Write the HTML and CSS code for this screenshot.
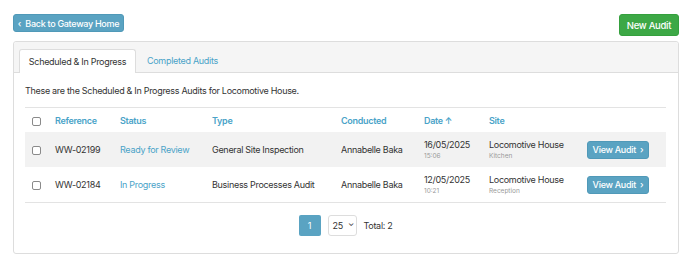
FILE: index.html
```html
<!DOCTYPE html>
<html lang="en">

<head>
  <meta charset="UTF-8" />
  <title>Audits</title>
  <link rel="stylesheet" href="styles.css">
</head>

<body>
  <div class="top-bar">
    <a href="#" class="btn btn-info btn-sm">&lsaquo;&nbsp; Back to Gateway Home</a>
    <a href="#" class="btn btn-success">New Audit</a>
  </div>

  <div class="panel">
    <div class="panel-heading">
      <ul class="tabs">
        <li class="tab active">Scheduled &amp; In Progress</li>
        <li class="tab">Completed Audits</li>
      </ul>
    </div>

    <div class="panel-body">
      <p class="intro">These are the Scheduled &amp; In Progress Audits for Locomotive House.</p>

      <table class="audit-table">
        <colgroup>
          <col style="width: 23px">
          <col style="width: 65px">
          <col style="width: 92px">
          <col style="width: 129px">
          <col style="width: 83px">
          <col style="width: 65px">
          <col style="width: 98px">
          <col>
        </colgroup>
        <thead>
          <tr>
            <th><span class="check"></span></th>
            <th>Reference</th>
            <th>Status</th>
            <th>Type</th>
            <th>Conducted</th>
            <th>Date <span class="sort">&#8593;</span></th>
            <th>Site</th>
            <th></th>
          </tr>
        </thead>
        <tbody>
          <tr class="striped">
            <td><span class="check"></span></td>
            <td>WW-02199</td>
            <td class="status">Ready for Review</td>
            <td>General Site Inspection</td>
            <td>Annabelle Baka</td>
            <td>16/05/2025<small>15:06</small></td>
            <td>Locomotive House<small>Kitchen</small></td>
            <td><a href="#" class="btn btn-info btn-sm">View Audit &nbsp;&rsaquo;</a></td>
          </tr>
          <tr>
            <td><span class="check"></span></td>
            <td>WW-02184</td>
            <td class="status">In Progress</td>
            <td>Business Processes Audit</td>
            <td>Annabelle Baka</td>
            <td>12/05/2025<small>10:21</small></td>
            <td>Locomotive House<small>Reception</small></td>
            <td><a href="#" class="btn btn-info btn-sm">View Audit &nbsp;&rsaquo;</a></td>
          </tr>
        </tbody>
      </table>

      <div class="pager">
        <span class="page-num">1</span>
        <span class="page-size">25 <span class="caret">&#8964;</span></span>
        <span class="total">Total: 2</span>
      </div>
    </div>
  </div>
</body>

</html>
```

FILE: styles.css
```css
body {
  font-family: Inter, 'Noto Sans', sans-serif;
  font-size: 9px;
  letter-spacing: -0.3px;
  color: #333333;
  margin: 0;
  padding: 14px 9px 0 13px;
  background-color: #ffffff;
}

.top-bar {
  display: flex;
  justify-content: space-between;
  align-items: flex-start;
  height: 22px;
  margin-bottom: 5px;
}

.btn {
  display: inline-flex;
  align-items: center;
  justify-content: center;
  text-decoration: none;
  color: #ffffff;
  border-radius: 3px;
  font-weight: 500;
  white-space: nowrap;
  box-sizing: border-box;
}

.btn-info {
  background-color: #5aa3c2;
  border: 1px solid #5099b8;
}

.btn-success {
  background-color: #3da846;
  border: 1px solid #35a03e;
  height: 22px;
  width: 60px;
  font-size: 9.5px;
}

.top-bar .btn-sm {
  height: 18px;
  width: 111px;
}

.panel {
  border: 1px solid #dddddd;
  border-radius: 3px;
  height: 213px;
  box-sizing: border-box;
}

.panel-heading {
  background-color: #f5f5f5;
  border-bottom: 1px solid #dddddd;
  height: 31px;
  box-sizing: border-box;
  padding: 7px 0 0 5px;
  border-radius: 3px 3px 0 0;
}

.tabs {
  display: flex;
  list-style: none;
  margin: 0;
  padding: 0;
}

.tab {
  height: 23px;
  display: flex;
  align-items: center;
  padding: 0 11px;
  color: #4aa3c8;
  box-sizing: border-box;
}

.tab.active {
  background-color: #ffffff;
  color: #333333;
  border: 1px solid #dddddd;
  border-bottom: none;
  border-radius: 3px 3px 0 0;
  height: 24px;
  width: 117px;
  justify-content: center;
  padding: 0;
}

.panel-body {
  padding: 0 12px 0 11px;
}

.intro {
  margin: 0;
  height: 34px;
  line-height: 36px;
}

.audit-table {
  width: 100%;
  table-layout: fixed;
  border-collapse: collapse;
  border-top: 1px solid #e3e3e3;
  border-bottom: 1px solid #e3e3e3;
}

.audit-table th {
  text-align: left;
  color: #4aa3c8;
  font-weight: 600;
  height: 24px;
  padding: 0 0 0 7px;
}

.audit-table td {
  padding: 0 0 0 7px;
  height: 35px;
  vertical-align: middle;
  white-space: nowrap;
}

.striped {
  background-color: #f2f2f2;
}

.status {
  color: #4aa3c8;
}

.sort {
  font-size: 8.5px;
}

.audit-table small {
  display: block;
  font-size: 6.5px;
  letter-spacing: 0;
  color: #999999;
  margin-top: 2px;
}

.check {
  display: inline-block;
  width: 7px;
  height: 7px;
  border: 1px solid #8a8a8a;
  border-radius: 2px;
  background-color: #ffffff;
  vertical-align: middle;
}

.audit-table .btn-sm {
  height: 18px;
  width: 62px;
}

.pager {
  display: flex;
  justify-content: center;
  align-items: center;
  gap: 7px;
  margin-top: 12px;
}

.page-num {
  width: 22px;
  height: 21px;
  display: flex;
  align-items: center;
  justify-content: center;
  background-color: #5aa3c2;
  color: #ffffff;
  border-radius: 2px;
}

.page-size {
  width: 29px;
  height: 21px;
  box-sizing: border-box;
  border: 1px solid #dddddd;
  border-radius: 3px;
  display: flex;
  align-items: center;
  padding-left: 4px;
  gap: 5px;
}

.caret {
  font-size: 8px;
  line-height: 1;
  margin-top: -5px;
}
```
